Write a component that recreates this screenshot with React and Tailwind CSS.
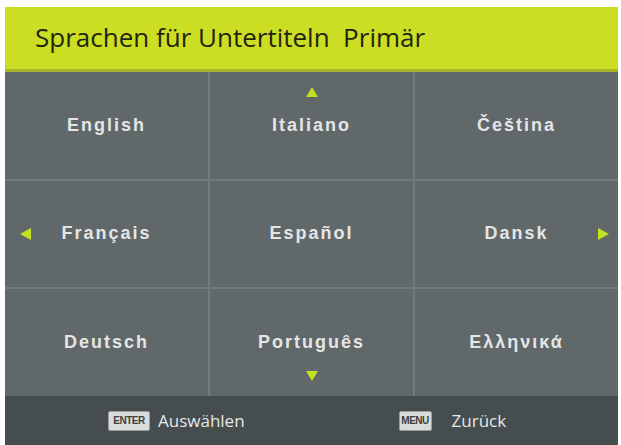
import React from 'react';

const rows = [
  ['English', 'Italiano', 'Čeština'],
  ['Français', 'Español', 'Dansk'],
  ['Deutsch', 'Português', 'Ελληνικά'],
];

// little green triangle used for the navigation hints
function Tri({ dir, className }) {
  const pts = {
    up: '6,0 12,10 0,10',
    down: '0,1 12,1 6,11',
    left: '0,6 11,0 11,12',
    right: '1,0 12,6 1,12',
  }[dir];
  return (
    <svg width="12" height="12" viewBox="0 0 12 12" className={className}>
      <polygon points={pts} fill="#c4df1d" />
    </svg>
  );
}

function KeyCap({ label, w }) {
  return (
    <span
      className={`${w} h-[20px] flex items-center justify-center rounded-[2px] bg-[#dadcdc] border border-[#9a9e9f] text-[10px] font-bold tracking-tighter text-[#3a3e40] leading-none`}
      style={{ fontFamily: '"Liberation Sans Narrow", "Liberation Sans", sans-serif' }}
    >
      {label}
    </span>
  );
}

export default function App() {
  return (
    <div className="w-[621px] h-[445px] bg-white pl-[5px] pr-[3px] pt-[7px] overflow-hidden">
      <div className="h-full flex flex-col">
        {/* Title bar */}
        <div
          className="h-[65px] shrink-0 bg-[#cbde24] border-b-[3px] border-[#a7b42c] flex items-center pl-[30px] pb-[2px] text-[26px] text-[#24250f]"
          style={{ fontFamily: '"Open Sans", sans-serif' }}
        >
          Sprachen für Untertiteln&nbsp; Primär
        </div>

        {/* Language grid */}
        <div className="grid grid-cols-3 grid-rows-3 h-[324px] shrink-0 gap-[2px] bg-[#737a7b]">
          {rows.map((row, r) =>
            row.map((lang, c) => (
              <div
                key={lang}
                className="relative bg-[#61686a] flex items-center justify-center text-[18px] font-bold tracking-[2px] text-[#e4e6e6]"
                style={{ fontFamily: '"Liberation Sans", Arial, sans-serif' }}
              >
                {r === 0 && c === 1 && <Tri dir="up" className="absolute top-[15px] left-1/2 -translate-x-1/2" />}
                {r === 2 && c === 1 && <Tri dir="down" className="absolute bottom-[14px] left-1/2 -translate-x-1/2" />}
                {r === 1 && c === 0 && <Tri dir="left" className="absolute left-[15px] top-1/2 -translate-y-1/2" />}
                {r === 1 && c === 2 && <Tri dir="right" className="absolute right-[9px] top-1/2 -translate-y-1/2" />}
                {lang}
              </div>
            ))
          )}
        </div>

        {/* Footer hints */}
        <div
          className="flex-1 bg-[#454d4f] flex items-center text-[17px] text-[#e6e8e8]"
          style={{ fontFamily: '"Open Sans", sans-serif' }}
        >
          <div className="ml-[103px] flex items-center gap-[8px]">
            <KeyCap label="ENTER" w="w-[42px]" />
            <span>Auswählen</span>
          </div>
          <div className="ml-[154px] flex items-center gap-[20px]">
            <KeyCap label="MENU" w="w-[33px]" />
            <span>Zurück</span>
          </div>
        </div>
      </div>
    </div>
  );
}
